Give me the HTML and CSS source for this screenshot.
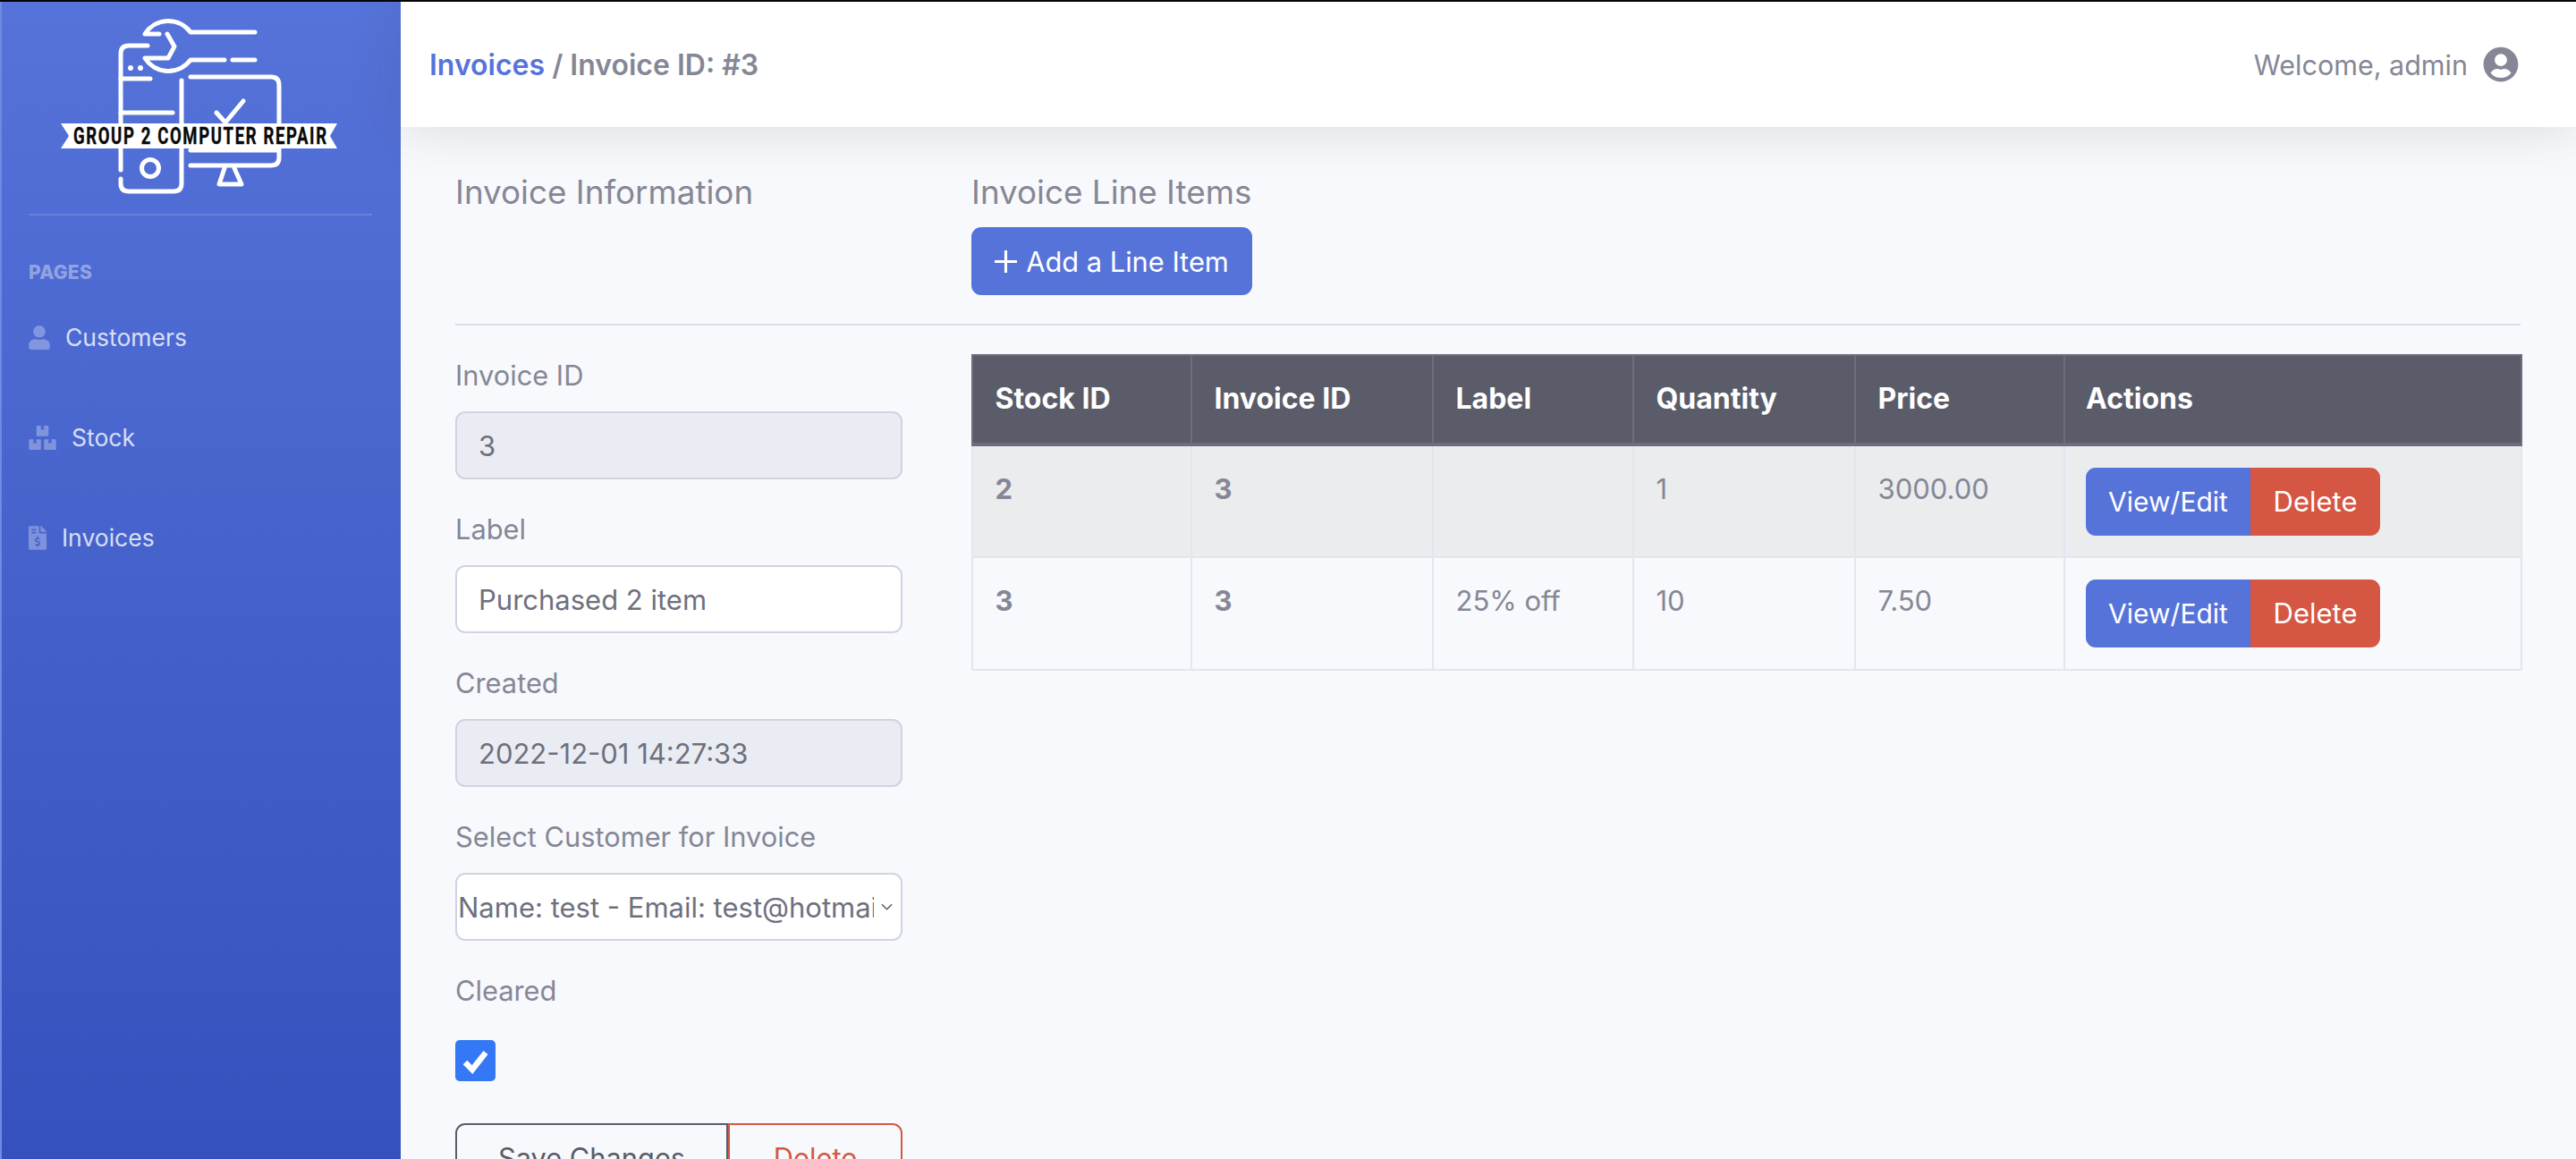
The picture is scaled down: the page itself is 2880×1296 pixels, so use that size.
FILE: index.html
```html
<!DOCTYPE html>
<html lang="en">
<head>
<meta charset="utf-8">
<title>Invoice ID: #3</title>
<link rel="stylesheet" href="styles.css">
</head>
<body>
<div class="page">
  <aside class="sidebar">
    <a class="brand" href="#">
      <svg class="logo" viewBox="0 0 320 230" width="320" height="230">
        <g class="logo-lines">
          <path d="M118 38H102A31 31 0 0 1 153 36H225"/>
          <path d="M127 38L135 52L128 65H102A31 31 0 0 0 153 67H191"/>
          <path d="M200 67H225"/>
          <path d="M105 51H84Q75 51 75 60V190"/>
          <path d="M75 200V205Q75 214 84 214H134Q143 214 143 205V90"/>
          <path d="M75 88H108"/>
          <path d="M75 126H133"/>
          <circle cx="108" cy="188" r="9.5"/>
          <path d="M153 86H243Q252 86 252 95V176Q252 185 243 185H153"/>
          <path d="M153 168H250"/>
          <path d="M182 126L192 137L212 113"/>
          <path d="M191 188L185 206H210L202 188"/>
        </g>
        <circle class="logo-dot" cx="86" cy="76" r="3"/>
        <circle class="logo-dot" cx="97" cy="76" r="3"/>
        <polygon class="logo-ribbon" points="8,138 317,138 309,152 317,166 8,166 17,152"/>
        <text class="logo-text" transform="scale(1 1.35)" x="22" y="119" textLength="283" lengthAdjust="spacing">GROUP 2 COMPUTER REPAIR</text>
      </svg>
    </a>
    <hr class="side-rule">
    <div class="side-heading">PAGES</div>
    <nav class="side-nav">
      <a class="side-link" href="#">
        <svg class="ic ic-user" viewBox="0 0 448 512"><path d="M224 256c70.7 0 128-57.3 128-128S294.7 0 224 0 96 57.3 96 128s57.3 128 128 128zm89.6 32h-16.7c-22.2 10.2-46.9 16-72.9 16s-50.6-5.8-72.9-16h-16.7C60.2 288 0 348.2 0 422.4V464c0 26.5 21.5 48 48 48h352c26.5 0 48-21.5 48-48v-41.6c0-74.2-60.2-134.4-134.4-134.4z"/></svg>
        <span>Customers</span>
      </a>
      <a class="side-link" href="#">
        <svg class="ic ic-boxes" viewBox="0 0 576 512"><path d="M560 288h-80v96l-32-21.3-32 21.3v-96h-80c-8.8 0-16 7.2-16 16v192c0 8.8 7.2 16 16 16h224c8.8 0 16-7.2 16-16V304c0-8.8-7.2-16-16-16zm-384-64h224c8.8 0 16-7.2 16-16V16c0-8.8-7.2-16-16-16h-80v96l-32-21.3L256 96V0h-80c-8.8 0-16 7.2-16 16v192c0 8.8 7.2 16 16 16zm64 64h-80v96l-32-21.3L96 384v-96H16c-8.8 0-16 7.2-16 16v192c0 8.8 7.2 16 16 16h224c8.8 0 16-7.2 16-16V304c0-8.8-7.2-16-16-16z"/></svg>
        <span>Stock</span>
      </a>
      <a class="side-link" href="#">
        <svg class="ic ic-file" viewBox="0 0 384 512"><path d="M377 105L279.1 7c-4.5-4.5-10.6-7-17-7H256v128h128v-6.1c0-6.3-2.5-12.4-7-16.9zm-153 31V0H24C10.7 0 0 10.7 0 24v464c0 13.3 10.7 24 24 24h336c13.3 0 24-10.7 24-24V160H248c-13.2 0-24-10.8-24-24zM64 72c0-4.42 3.58-8 8-8h80c4.42 0 8 3.58 8 8v16c0 4.42-3.58 8-8 8H72c-4.42 0-8-3.58-8-8V72zm0 80v-16c0-4.42 3.58-8 8-8h80c4.42 0 8 3.58 8 8v16c0 4.42-3.58 8-8 8H72c-4.42 0-8-3.58-8-8zm144 263.88V440c0 4.42-3.58 8-8 8h-16c-4.42 0-8-3.58-8-8v-24.29c-11.29-.58-22.27-4.52-31.37-11.35-3.9-2.93-4.1-8.77-.57-12.14l11.75-11.21c2.77-2.64 6.89-2.76 10.13-.73 3.87 2.42 8.26 3.72 12.82 3.72h28.11c6.5 0 11.8-5.92 11.8-13.19 0-5.95-3.61-11.19-8.77-12.73l-45-13.5c-18.59-5.58-31.58-23.42-31.58-43.39 0-24.52 19.05-44.44 42.67-45.07V232c0-4.42 3.58-8 8-8h16c4.42 0 8 3.58 8 8v24.29c11.29.58 22.27 4.51 31.37 11.35 3.9 2.93 4.1 8.77.57 12.14l-11.75 11.21c-2.77 2.64-6.89 2.76-10.13.73-3.87-2.43-8.26-3.72-12.82-3.72h-28.11c-6.5 0-11.8 5.92-11.8 13.19 0 5.95 3.61 11.19 8.77 12.73l45 13.5c18.59 5.58 31.58 23.42 31.58 43.39 0 24.53-19.05 44.44-42.67 45.07z"/></svg>
        <span>Invoices</span>
      </a>
    </nav>
  </aside>

  <div class="wrapper">
    <header class="topbar">
      <div class="crumbs"><a href="#">Invoices</a> / Invoice ID: #3</div>
      <div class="user">
        <span>Welcome, admin</span>
        <svg class="user-ic" viewBox="0 0 496 512"><path d="M248 8C111 8 0 119 0 256s111 248 248 248 248-111 248-248S385 8 248 8zm0 96c48.6 0 88 39.4 88 88s-39.4 88-88 88-88-39.4-88-88 39.4-88 88-88zm0 344c-58.7 0-111.3-26.6-146.5-68.2 18.8-35.4 55.6-59.8 98.5-59.8 2.4 0 4.8.4 7.1 1.1 13 4.2 26.6 6.9 40.9 6.9 14.3 0 28-2.7 40.9-6.9 2.3-.7 4.7-1.1 7.1-1.1 42.9 0 79.7 24.4 98.5 59.8C359.3 421.4 306.7 448 248 448z"/></svg>
      </div>
    </header>

    <main class="content">
      <div class="head-row">
        <div class="col-form"><h5 class="title">Invoice Information</h5></div>
        <div class="col-items">
          <h5 class="title">Invoice Line Items</h5>
          <a class="btn btn-primary btn-add" href="#">
            <svg class="plus" viewBox="0 0 24 24"><path d="M12 0V24M0 12H24"/></svg>
            <span>Add a Line Item</span>
          </a>
        </div>
      </div>
      <hr class="rule">
      <div class="body-row">
        <form class="col-form">
          <label class="field-label" for="f-id">Invoice ID</label>
          <input class="control" id="f-id" type="text" value="3" disabled>
          <label class="field-label" for="f-label">Label</label>
          <input class="control" id="f-label" type="text" value="Purchased 2 item">
          <label class="field-label" for="f-created">Created</label>
          <input class="control" id="f-created" type="text" value="2022-12-01 14:27:33" disabled>
          <label class="field-label" for="f-cust">Select Customer for Invoice</label>
          <select class="control control-select" id="f-cust">
            <option>Name: test - Email: test@hotmail.com</option>
          </select>
          <label class="field-label" for="f-clear">Cleared</label>
          <input class="check" id="f-clear" type="checkbox" checked>
          <div class="btn-group form-actions">
            <a class="btn btn-outline-dark" href="#">Save Changes</a>
            <a class="btn btn-outline-danger" href="#">Delete</a>
          </div>
        </form>
        <div class="col-items">
          <table class="items">
            <colgroup>
              <col class="c1"><col class="c2"><col class="c3"><col class="c4"><col class="c5"><col class="c6">
            </colgroup>
            <thead>
              <tr><th>Stock ID</th><th>Invoice ID</th><th>Label</th><th>Quantity</th><th>Price</th><th>Actions</th></tr>
            </thead>
            <tbody>
              <tr class="odd">
                <td class="strong">2</td><td class="strong">3</td><td></td><td>1</td><td>3000.00</td>
                <td><div class="btn-group"><a class="btn btn-primary btn-view" href="#">View/Edit</a><a class="btn btn-danger btn-del" href="#">Delete</a></div></td>
              </tr>
              <tr>
                <td class="strong">3</td><td class="strong">3</td><td>25% off</td><td>10</td><td>7.50</td>
                <td><div class="btn-group"><a class="btn btn-primary btn-view" href="#">View/Edit</a><a class="btn btn-danger btn-del" href="#">Delete</a></div></td>
              </tr>
            </tbody>
          </table>
        </div>
      </div>
    </main>
  </div>
</div>
</body>
</html>
```

FILE: styles.css
```css
* { box-sizing: border-box; }
html, body { margin: 0; height: 100%; overflow: hidden; }
body {
  font-family: Inter, "Liberation Sans", sans-serif;
  font-size: 30.8px;
  color: #858796;
  background: #f8f9fc;
}
a { text-decoration: none; }

.page {
  display: flex;
  height: 1296px;
  border-top: 2px solid #050505;
  overflow: hidden;
}

/* Sidebar */
.sidebar {
  flex: 0 0 448px;
  padding-left: 30px;
  border-left: 2px solid #7089e2;
  background: linear-gradient(180deg, #5673da 0%, #3451bd 100%);
}
.brand { display: block; height: 239px; margin-left: 28px; margin-top: -2px; }
.logo { display: block; }
.logo-lines { fill: none; stroke: #fff; stroke-width: 5; stroke-linecap: round; stroke-linejoin: round; }
.logo-dot { fill: #fff; }
.logo-ribbon { fill: #fff; }
.logo-text { font-family: Roboto, "Liberation Sans", sans-serif; font-weight: 700; font-size: 18.5px; fill: #0a0a0a; stroke: #0a0a0a; stroke-width: .3; }
.side-rule { width: 384px; height: 2px; margin: 0; border: 0; background: rgba(255,255,255,.15); }
.side-heading {
  margin-top: 52px;
  font-size: 21px;
  line-height: 24px;
  font-weight: 800;
  letter-spacing: .3px;
  color: rgba(255,255,255,.4);
}
.side-nav { display: flex; flex-direction: column; margin-top: 36px; }
.side-link {
  display: flex;
  align-items: center;
  height: 112px;
  padding-bottom: 64px;
  font-size: 26.5px;
  color: rgba(255,255,255,.8);
}
.ic { display: block; height: 27px; fill: rgba(255,255,255,.3); flex: none; }
.ic-user { width: 24px; margin-right: 17px; }
.ic-boxes { width: 31px; margin-right: 17px; }
.ic-file { width: 20px; margin-right: 17px; }

/* Top bar */
.wrapper { flex: 1; display: flex; flex-direction: column; min-width: 0; }
.topbar {
  position: relative;
  z-index: 2;
  flex: 0 0 140px;
  display: flex;
  align-items: center;
  justify-content: space-between;
  padding: 0 64px 0 32px;
  background: #fff;
  box-shadow: 0 4px 56px rgba(58,59,69,.15);
}
.crumbs { font-size: 32px; font-weight: 600; }
.crumbs a { color: #5673da; }
.user { display: flex; align-items: center; gap: 17px; font-size: 30.5px; }
.user-ic { width: 40px; height: 40px; fill: #858796; }

/* Content */
.content { flex: 1; padding: 51px 62px 0 61px; }
.head-row, .body-row { display: flex; }
.col-form { flex: 0 0 500px; margin-right: 77px; }
.col-items { flex: 1; min-width: 0; }
.title { margin: 0 0 17px; font-size: 36.8px; line-height: 44px; font-weight: 400; }
.rule { height: 2px; margin: 32px 0 32px; border: 0; background: #dddfe6; }

/* Buttons */
.btn {
  display: inline-flex;
  align-items: center;
  justify-content: center;
  height: 76px;
  padding: 0 24px;
  border: 2px solid transparent;
  border-radius: 11px;
  font-size: 30.8px;
  color: #fff;
  white-space: nowrap;
}
.btn-primary { background: #5673da; border-color: #5673da; }
.btn-danger { background: #d55743; border-color: #d55743; }
.btn-add { width: 314px; padding: 0; gap: 10px; }
.plus { width: 25px; height: 25px; fill: none; stroke: #fff; stroke-width: 3; }
.btn-view { width: 184px; padding: 0; font-size: 30px; }
.btn-del { width: 145px; padding: 0; font-size: 31px; }
.btn-group { display: flex; }
.btn-group .btn:first-child { border-top-right-radius: 0; border-bottom-right-radius: 0; }
.btn-group .btn:last-child { border-top-left-radius: 0; border-bottom-left-radius: 0; }
.btn-outline-dark { flex: 0 0 305px; border-color: #5a5c69; color: #5a5c69; }
.btn-outline-danger { flex: 1; border-color: #d55743; color: #d55743; }

/* Form */
.field-label { display: block; height: 48px; margin-bottom: 16px; line-height: 48px; }
.control {
  display: block;
  width: 100%;
  height: 76px;
  margin: 0 0 32px;
  padding: 0 24px;
  border: 2px solid #d1d3e2;
  border-radius: 11px;
  background: #fff;
  font-family: inherit;
  font-size: 31px;
  color: #6e707e;
  opacity: 1;
}
.control:disabled { background: #eaecf4; color: #6e707e; -webkit-text-fill-color: #6e707e; }
.control-select {
  appearance: none;
  -webkit-appearance: none;
  padding: 0 30px 0 1px;
  background: #fff url("data:image/svg+xml,%3Csvg xmlns='http://www.w3.org/2000/svg' viewBox='0 0 14 8'%3E%3Cpath d='M1 1l6 6 6-6' fill='none' stroke='%235a5c69' stroke-width='1.6'/%3E%3C/svg%3E") no-repeat right 9px center / 13px 8px;
}
.check {
  appearance: none;
  -webkit-appearance: none;
  display: block;
  width: 45px;
  height: 46px;
  margin: 31px 0 47px;
  border-radius: 5px;
  background: #3478f6 url("data:image/svg+xml,%3Csvg xmlns='http://www.w3.org/2000/svg' viewBox='0 0 45 46'%3E%3Cpath d='M11 25l8 8 15-19' fill='none' stroke='%23fff' stroke-width='6.5'/%3E%3C/svg%3E") no-repeat center / 100% 100%;
}

/* Table */
.items {
  width: 100%;
  table-layout: fixed;
  border-collapse: collapse;
  font-size: 31px;
}
.c1 { width: 245px; }
.c2 { width: 270px; }
.c3 { width: 224px; }
.c4 { width: 248px; }
.c5 { width: 234px; }
.c6 { width: 511px; }
.items th {
  height: 100px;
  padding: 0 24.5px 2px;
  text-align: left;
  font-size: 32px;
  font-weight: 700;
  color: #fff;
  background: #5a5c69;
  border: 2px solid #6c6e7d;
  border-bottom-width: 4px;
}
.items td {
  height: 126px;
  padding: 24px 24.5px 0;
  vertical-align: top;
  line-height: 48px;
  border: 2px solid #e3e6f0;
}
.items th:last-child, .items td:last-child { padding-left: 23px; }
.items .odd td { background: #ebecee; }
.items td.strong { font-weight: 700; }
```
